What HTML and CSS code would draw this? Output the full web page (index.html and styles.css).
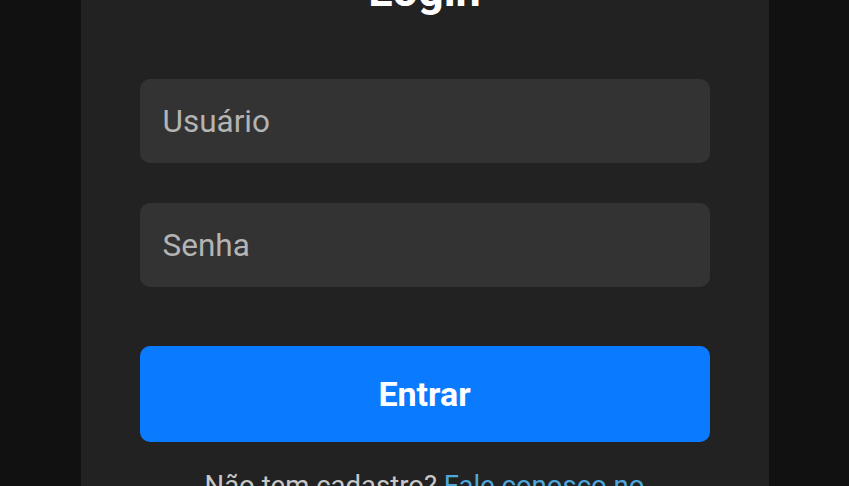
FILE: index.html
```html
<!DOCTYPE html>
<html lang="pt-BR">
<head>
<meta charset="utf-8">
<title>Login</title>
<link rel="stylesheet" href="styles.css">
</head>
<body>
<main class="card">
  <h1 class="title">Login</h1>
  <form class="form">
    <input class="field" type="text" placeholder="Usuário">
    <input class="field" type="password" placeholder="Senha">
    <button class="btn" type="button">Entrar</button>
  </form>
  <p class="signup">Não tem cadastro? <a class="link" href="#">Fale conosco no<br>WhatsApp</a></p>
</main>
</body>
</html>
```
FILE: styles.css
```css
html, body {
  margin: 0;
  padding: 0;
  height: 100%;
}
body {
  background: #111111;
  font-family: Roboto, "Noto Sans", sans-serif;
  overflow: hidden;
}
.card {
  width: 688px;
  margin: -36px auto 0;
  padding: 0 59px 40px;
  box-sizing: border-box;
  background: #222222;
  min-height: 600px;
}
.title {
  margin: 0 0 61px;
  font-size: 45px;
  line-height: 54px;
  font-weight: 700;
  color: #ffffff;
  text-align: center;
}
.form {
  display: flex;
  flex-direction: column;
}
.field {
  height: 84px;
  border: none;
  border-radius: 10px;
  background: #333333;
  padding: 0 23px;
  font-family: Roboto, "Noto Sans", sans-serif;
  font-size: 31.5px;
  color: #e0e0e0;
  outline: none;
  margin-bottom: 40px;
  box-sizing: border-box;
}
.field::placeholder {
  color: #b4b4b4;
}
.btn {
  margin-top: 19px;
  height: 96px;
  border: none;
  border-radius: 10px;
  background: #0a7bff;
  color: #ffffff;
  font-family: Roboto, "Noto Sans", sans-serif;
  font-size: 34px;
  font-weight: 700;
}
.signup {
  margin: 25px 0 0;
  text-align: center;
  font-size: 27.5px;
  line-height: 38px;
  color: #c8c8c8;
}
.link {
  color: #4ea8de;
  text-decoration: none;
}
```
